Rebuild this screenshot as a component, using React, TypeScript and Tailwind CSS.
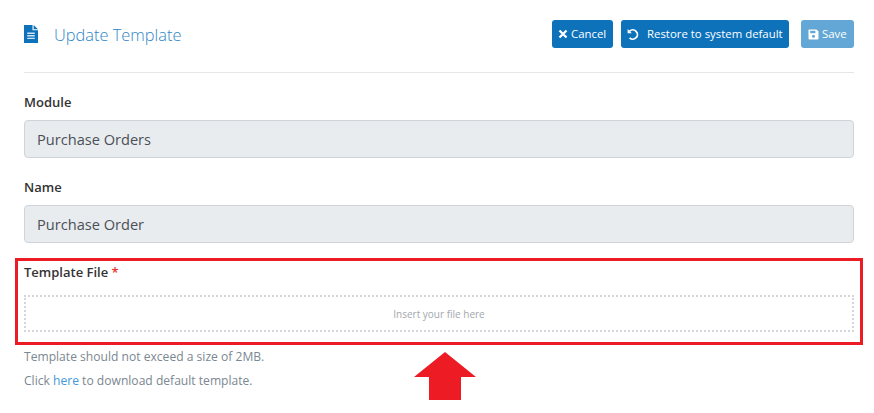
import React from "react";

function Btn({ children, className }: { children: React.ReactNode; className: string }) {
  return (
    <button className={`h-[28px] rounded-[3px] flex items-center whitespace-nowrap text-white text-[11.4px] font-medium ${className}`}>
      {children}
    </button>
  );
}

export default function App() {
  return (
    <div className="relative w-[874px] h-[413px] overflow-hidden bg-white pl-[24px] pr-[20px] pt-[20px] font-['Open_Sans',sans-serif] text-[#333]">
      <header className="flex items-center justify-between h-[28px]">
        <div className="flex items-center">
          <svg width="14" height="18" viewBox="0 0 14 18" className="mr-[16px]">
            <path d="M0 0H8.5V5.2H14V18H0Z" fill="#0e72bb" />
            <path d="M9.6 0L14 4.2H9.6Z" fill="#0e72bb" />
            <path d="M3.2 8.2H10.8M3.2 10.8H10.8M3.2 13.4H10.8" stroke="#cfe3f2" strokeWidth="1.4" />
          </svg>
          <h1 className="text-[16.4px] font-light text-[#2f86c6] leading-none pt-[2px]">Update Template</h1>
        </div>
        <div className="flex items-center">
          <Btn className="w-[61px] pl-[6px] bg-[#0e72bb]">
            <svg width="10" height="10" viewBox="0 0 10 10" className="mr-[3px]">
              <path d="M1.5 1.5L8.5 8.5M8.5 1.5L1.5 8.5" stroke="#fff" strokeWidth="2.2" />
            </svg>
            Cancel
          </Btn>
          <Btn className="w-[168px] ml-[8px] pl-[6px] bg-[#0e72bb]">
            <svg width="13" height="13" viewBox="0 0 13 13" className="mr-[7px]">
              <path d="M2.6 3.2A4.6 4.6 0 1 1 2.6 9.8" fill="none" stroke="#fff" strokeWidth="1.8" />
              <path d="M0.6 1V5.2H4.8Z" fill="#fff" />
            </svg>
            Restore to system default
          </Btn>
          <Btn className="w-[53px] ml-[12px] pl-[7px] bg-[#62a7d5]">
            <svg width="11" height="11" viewBox="0 0 11 11" className="mr-[3px]">
              <path d="M1 0.5H8.5L10.5 2.5V9.5A1 1 0 0 1 9.5 10.5H1.5A1 1 0 0 1 0.5 9.5V1Z" fill="#fff" />
              <rect x="2.2" y="1.8" width="5.2" height="2.4" fill="#62a7d5" />
              <circle cx="5.5" cy="7.3" r="1.5" fill="#62a7d5" />
            </svg>
            Save
          </Btn>
        </div>
      </header>

      <hr className="mt-[24px] border-t border-[#e4e6e8]" />

      <section className="mt-[20px]">
        <label className="block text-[13px] font-semibold leading-[18px]">Module</label>
        <div className="mt-[9px] h-[38px] flex items-center pl-[12px] pt-[2px] bg-[#e9ecef] border border-[#ced4da] rounded-[4px] text-[14.6px] text-[#495057]">
          Purchase Orders
        </div>
      </section>

      <section className="mt-[20px]">
        <label className="block text-[13px] font-semibold leading-[18px]">Name</label>
        <div className="mt-[9px] h-[38px] flex items-center pl-[12px] pt-[2px] bg-[#e9ecef] border border-[#ced4da] rounded-[4px] text-[14.6px] text-[#495057]">
          Purchase Order
        </div>
      </section>

      <section className="mt-[20px]">
        <label className="block text-[13px] font-semibold leading-[18px]">
          Template File <span className="text-[#e3342f]">*</span>
        </label>
        <div className="mt-[14px] h-[37px] flex items-center justify-center pt-[2px] border-2 border-dotted border-[#d3d7db] text-[10px] text-[#a3a8ad]">
          Insert your file here
        </div>
        <p className="mt-[16px] text-[12.1px] leading-[18px] text-[#7b8791]">Template should not exceed a size of 2MB.</p>
        <p className="mt-[6px] text-[12.1px] leading-[18px] text-[#7b8791]">
          Click <a className="text-[#3f97dc]">here</a> to download default template.
        </p>
      </section>

      <div className="absolute left-[15px] top-[258px] w-[848px] h-[87px] border-[3px] border-[#ed1c24]" />
      <svg width="62" height="48" viewBox="0 0 62 48" className="absolute left-[414px] top-[352px]">
        <path d="M31 0L62 25H47V48H15V25H0Z" fill="#ed1c24" />
      </svg>
    </div>
  );
}
